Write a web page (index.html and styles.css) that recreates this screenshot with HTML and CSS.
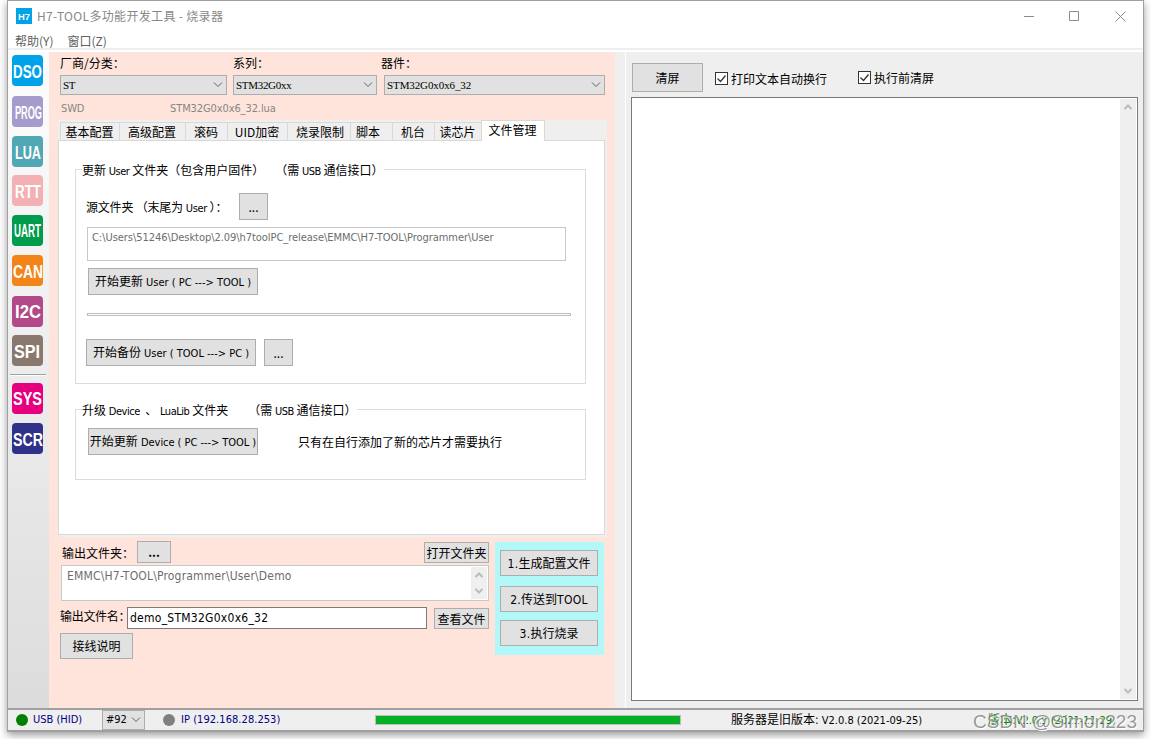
FILE: index.html
```
<!DOCTYPE html>
<html lang="zh-CN">
<head>
  <meta charset="UTF-8">
  <title>H7-TOOL多功能开发工具 - 烧录器</title>
  <link rel="stylesheet" href="styles.css">
</head>
<body>
<div class="window">

  <!-- Title bar -->
  <header class="titlebar">
    <svg class="logo" width="16" height="16"><rect width="16" height="16" fill="#00a2e8"/><text x="2" y="12" textLength="12" lengthAdjust="spacingAndGlyphs">H7</text></svg>
    <span class="title">H7-TOOL多功能开发工具 - 烧录器</span>
    <svg class="controls" width="110" height="14" fill="none" stroke="#8c8c8c">
      <path d="M0 7.5h10M45.5 2.5h9v9h-9zM91.5 2.5l10 10M101.5 2.5l-10 10"/>
    </svg>
  </header>
  <nav class="menu">
    <span>帮助(Y)</span>
    <span>窗口(Z)</span>
  </nav>

  <main class="body">
    <!-- Tool buttons -->
    <aside class="sidebar">
      <svg class="tool dso"><text x="1" y="23" textLength="29" lengthAdjust="spacingAndGlyphs">DSO</text></svg>
      <svg class="tool prog"><text x="3" y="23" textLength="27" lengthAdjust="spacingAndGlyphs">PROG</text></svg>
      <svg class="tool lua"><text x="3" y="23" textLength="26" lengthAdjust="spacingAndGlyphs">LUA</text></svg>
      <svg class="tool rtt"><text x="3" y="23" textLength="26" lengthAdjust="spacingAndGlyphs">RTT</text></svg>
      <svg class="tool uart"><text x="2" y="22" textLength="27" lengthAdjust="spacingAndGlyphs">UART</text></svg>
      <svg class="tool can"><text x="1" y="23" textLength="30" lengthAdjust="spacingAndGlyphs">CAN</text></svg>
      <svg class="tool i2c"><text x="3" y="22" textLength="26" lengthAdjust="spacingAndGlyphs">I2C</text></svg>
      <svg class="tool spi"><text x="2" y="23" textLength="26" lengthAdjust="spacingAndGlyphs">SPI</text></svg>
      <hr>
      <svg class="tool sys"><text x="1" y="22" textLength="29" lengthAdjust="spacingAndGlyphs">SYS</text></svg>
      <svg class="tool scr"><text x="1" y="23" textLength="30" lengthAdjust="spacingAndGlyphs">SCR</text></svg>
    </aside>

    <!-- Programmer panel -->
    <section class="programmer">
      <div class="chip">
        <label>厂商/分类：</label>
        <label>系列：</label>
        <label>器件：</label>
        <div class="combo"><span>ST</span><svg class="arrow"><path d="M1 1.5l4 4 4-4"/></svg></div>
        <div class="combo"><span>STM32G0xx</span><svg class="arrow"><path d="M1 1.5l4 4 4-4"/></svg></div>
        <div class="combo"><span>STM32G0x0x6_32</span><svg class="arrow"><path d="M1 1.5l4 4 4-4"/></svg></div>
      </div>
      <div class="script-info"><span>SWD</span><span>STM32G0x0x6_32.lua</span></div>

      <div class="tabs">
        <div class="tab t1">基本配置</div>
        <div class="tab t2">高级配置</div>
        <div class="tab t3">滚码</div>
        <div class="tab t4">UID加密</div>
        <div class="tab t5">烧录限制</div>
        <div class="tab t6">脚本</div>
        <div class="tab t7">机台</div>
        <div class="tab t8">读芯片</div>
        <div class="tab active">文件管理</div>
      </div>
      <div class="page">
        <fieldset class="user-group">
          <legend>更新<i> User </i>文件夹（包含用户固件）<i class="gap"></i>（需<i> USB </i>通信接口）</legend>
          <div class="source">
            <span>源文件夹 （末尾为<i> User</i> ）：</span>
            <button class="more">...</button>
          </div>
          <div class="path">C:\Users\51246\Desktop\2.09\h7toolPC_release\EMMC\H7-TOOL\Programmer\User</div>
          <button class="wide">开始更新<i> User ( PC ---&gt; TOOL )</i></button>
          <div class="bevel"></div>
          <div class="backup">
            <button class="wide">开始备份<i> User ( TOOL ---&gt; PC )</i></button>
            <button class="more">...</button>
          </div>
        </fieldset>
        <fieldset class="device-group">
          <legend>升级<i> Device </i> 、<i> LuaLib </i>文件夹<i class="gap2"></i>（需<i> USB </i>通信接口）</legend>
          <div class="device">
            <button class="wide">开始更新<i> Device ( PC ---&gt; TOOL )</i></button>
            <span>只有在自行添加了新的芯片才需要执行</span>
          </div>
        </fieldset>
      </div>

      <div class="output">
        <div class="files">
          <div class="folder">
            <span>输出文件夹：</span>
            <button class="dots">...</button>
            <button class="open">打开文件夹</button>
          </div>
          <div class="memo">
            <span>EMMC\H7-TOOL\Programmer\User\Demo</span>
            <div class="scroll"><svg class="arrow"><path d="M1.5 6l3.5-3.5L8.5 6"/></svg><svg class="arrow"><path d="M1.5 2l3.5 3.5L8.5 2"/></svg></div>
          </div>
          <div class="name">
            <span>输出文件名：</span>
            <div class="input">demo_STM32G0x0x6_32</div>
            <button>查看文件</button>
          </div>
          <button class="wiring">接线说明</button>
        </div>
        <div class="steps">
          <button><i>1.</i>生成配置文件</button>
          <button><i>2.</i>传送到<i>TOOL</i></button>
          <button><i>3.</i>执行烧录</button>
        </div>
      </div>
    </section>

    <!-- Log panel -->
    <section class="log">
      <div class="log-bar">
        <button>清屏</button>
        <label class="wrap"><svg class="check"><rect x=".5" y=".5" width="12" height="12"/><path d="M2.5 6.5l3 3 5-6"/></svg>打印文本自动换行</label>
        <label class="clear"><svg class="check"><rect x=".5" y=".5" width="12" height="12"/><path d="M2.5 6.5l3 3 5-6"/></svg>执行前清屏</label>
      </div>
      <div class="console">
        <div class="scroll"><svg class="arrow"><path d="M1.5 6l3.5-3.5L8.5 6"/></svg><svg class="arrow"><path d="M1.5 2l3.5 3.5L8.5 2"/></svg></div>
      </div>
    </section>
  </main>

  <!-- Status bar -->
  <footer class="status">
    <span class="dot green"></span><span class="usb">USB (HID)</span>
    <div class="device-no"><span>#92</span><svg class="arrow"><path d="M1 1.5l4 4 4-4"/></svg></div>
    <span class="dot grey"></span><span class="ip">IP (192.168.28.253)</span>
    <div class="progress"></div>
    <span class="server">服务器是旧版本:<i> V2.0.8 (2021-09-25)</i></span>
    <span class="version">版本:<i>V2.0.9 (2021-11-29)</i></span>
  </footer>
</div>
<div class="watermark">CSDN @Simon223</div>
</body>
</html>
```
FILE: styles.css
```
* {
  box-sizing: border-box;
}
body {
  margin: 0;
  height: 739px;
  overflow: hidden;
  background: #fff;
  font: 12px/14px "Noto Sans CJK SC", sans-serif;
  color: #000;
}
i, .script-info, .path, .memo, .input, .status {
  font-family: "DejaVu Sans Condensed", "DejaVu Sans", "Noto Sans CJK SC", sans-serif;
  font-stretch: condensed;
  font-style: normal;
}
i {
  font-size: 11px;
  letter-spacing: -0.3px;
  white-space: pre;
}
button {
  padding: 0;
  border: 1px solid #adadad;
  background: #e1e1e1;
  color: #000;
  font: inherit;
  white-space: nowrap;
}
.window {
  width: 1137px;
  height: 732px;
  margin-left: 7px;
  border: 1px solid #a0a0a0;
  border-bottom-width: 2px;
  background: #efefef;
  box-shadow: 0 3px 8px rgba(0, 0, 0, 0.4);
}

/* title and menu */
.titlebar {
  display: flex;
  align-items: center;
  height: 29px;
  padding: 0 9px 0 8px;
  background: #fff;
  color: #888;
}
.logo text {
  fill: #fff;
  font: bold 9px "Liberation Sans", sans-serif;
}
.title {
  margin-left: 5px;
  font-size: 12px;
  letter-spacing: 0.33px;
}
.controls {
  margin-left: auto;
}
.menu {
  display: flex;
  gap: 14px;
  height: 22px;
  padding: 4px 7px 0;
  border-bottom: 2px solid #fff;
  background: linear-gradient(#fff 18px, #efefef 18px);
  background-clip: padding-box;
  color: #606060;
}
.body {
  display: flex;
  height: 656px;
}

/* tool buttons */
.sidebar {
  width: 41px;
  padding: 3px 4px 0;
  background: linear-gradient(#fdfdfd, #dcdcdc);
}
.tool {
  display: block;
  width: 31px;
  height: 31px;
  margin-bottom: 9px;
  border-radius: 4px;
  overflow: visible;
}
.tool text {
  fill: #fff;
  font: bold 18px "Liberation Sans", sans-serif;
}
.dso { background: #00a2e8; margin-bottom: 10px; }
.prog { background: #a79bcd; }
.lua { background: #52a7b4; margin-bottom: 8px; }
.rtt { background: #f4b1b3; }
.uart { background: #009c4e; }
.can { background: #f28519; margin-bottom: 10px; }
.i2c { background: #b24988; margin-bottom: 8px; }
.spi { background: #89786d; margin-bottom: 8px; }
.sys { background: #e6007f; }
.scr { background: #2f3288; }
.sidebar hr {
  width: 36px;
  height: 2px;
  margin: 0 0 7px -2px;
  border: 0;
  border-top: 1px solid #a0a0a0;
  background: #fff;
}

/* programmer panel */
.programmer {
  width: 566px;
  padding: 4px 8px 0 9px;
  background: #ffe4db;
}
.chip {
  display: grid;
  grid-template-columns: 167px 143px 221px;
  grid-template-rows: 19px 20px;
  column-gap: 7px;
  padding-left: 2px;
}
.chip label:nth-child(2) {
  margin-left: -1px;
}
.chip label:nth-child(3) {
  margin-left: -3px;
}
.combo {
  display: flex;
  align-items: center;
  justify-content: space-between;
  padding: 0 3px 0 2px;
  border: 1px solid #adadad;
  background: #e1e1e1;
  font: 11px "Liberation Serif", serif;
  letter-spacing: -0.3px;
}
.combo:nth-child(5) {
  margin-left: -1px;
}
.combo:nth-child(6) {
  letter-spacing: -0.1px;
}
.arrow {
  width: 10px;
  height: 8px;
  fill: none;
  stroke: #606060;
}
.script-info {
  display: flex;
  height: 25px;
  padding: 7px 0 0 3px;
  color: #868686;
  font-size: 11px;
  letter-spacing: -0.1px;
}
.script-info span:first-child {
  width: 109px;
}
.tabs {
  display: flex;
  align-items: flex-end;
  height: 20px;
  padding-left: 2px;
  background: #efefef;
}
.tab {
  height: 18px;
  padding: 2px 1px 0 0;
  border: 1px solid #d9d9d9;
  border-width: 1px 0 0 1px;
  text-align: center;
  white-space: nowrap;
}
.t1 { width: 59px; }
.t2 { width: 66px; }
.t3 { width: 42px; }
.t4 { width: 60px; }
.t5 { width: 63px; padding-left: 3px; }
.t6 { width: 42px; padding-right: 7px; }
.t7 { width: 42px; }
.t8 { width: 47px; }
.tab.active {
  width: 64px;
  height: 21px;
  margin-bottom: -1px;
  border-right-width: 1px;
  background: #fff;
  position: relative;
}
.page {
  width: 547px;
  height: 395px;
  padding: 20px 17px 0 16px;
  border: 1px solid #d9d9d9;
  background: #fff;
  box-shadow: 2px 2px #efefef;
}
fieldset {
  width: 511px;
  min-width: 0;
  margin: 0;
  padding: 0;
  border: 1px solid #dcdcdc;
}
legend {
  height: 16px;
  margin-left: 6px;
  padding: 2px 0 0;
  white-space: nowrap;
}
.gap {
  display: inline-block;
  width: 11px;
}
.gap2 {
  display: inline-block;
  width: 20px;
}
legend i {
  letter-spacing: -0.45px;
}
.user-group {
  height: 223px;
  padding-left: 10px;
}
.user-group legend {
  margin-left: -4px;
}
.source {
  display: flex;
  align-items: center;
  height: 27px;
  margin-top: 16px;
}
.source span {
  width: 153px;
  padding-top: 2px;
  letter-spacing: -0.2px;
  white-space: nowrap;
}
.more {
  width: 29px;
  height: 27px;
}
.path {
  width: 479px;
  height: 34px;
  margin: 7px 0 7px 1px;
  padding: 3px 4px;
  border: 1px solid #c8c8c8;
  color: #6d6d6d;
  font-size: 11px;
  letter-spacing: -0.05px;
  white-space: nowrap;
}
.wide {
  display: block;
  width: 170px;
  height: 27px;
}
.wide i {
  letter-spacing: 0;
}
.path + .wide {
  margin-left: 2px;
}
.bevel {
  width: 484px;
  height: 3px;
  margin: 18px 0 23px 1px;
  border: 1px solid #bcbcbc;
}
.backup {
  display: flex;
  gap: 8px;
}
.device-group {
  height: 79px;
  margin-top: 17px;
}
.device {
  display: flex;
  align-items: center;
  gap: 40px;
  margin: 11px 0 0 12px;
}
.device i {
  letter-spacing: -0.05px;
}

/* output settings */
.output {
  display: flex;
  gap: 6px;
  margin-top: 6px;
  padding-left: 2px;
}
.files {
  width: 429px;
}
.folder {
  display: flex;
  height: 24px;
  padding-left: 2px;
}
.folder span {
  width: 75px;
  padding-top: 5px;
}
.dots {
  width: 34px;
  height: 22px;
  font-weight: bold;
}
.open {
  width: 65px;
  height: 21px;
  margin: 1px 0 0 auto;
}
.memo {
  display: flex;
  justify-content: space-between;
  width: 428px;
  height: 36px;
  margin-left: 1px;
  padding: 1px 1px 1px 5px;
  border: 1px solid #c8c8c8;
  background: #fff;
  color: #6d6d6d;
  letter-spacing: 0.18px;
}
.memo span {
  padding-top: 2px;
}
.scroll {
  display: flex;
  flex-direction: column;
  align-items: center;
  justify-content: space-between;
  width: 16px;
  padding: 4px 0;
  background: #efefef;
}
.scroll .arrow {
  stroke: #bcbcbc;
  stroke-width: 2;
}
.name {
  display: flex;
  height: 22px;
  margin: 6px 0 4px;
}
.name span {
  width: 67px;
  padding-top: 2px;
  letter-spacing: -0.3px;
  white-space: nowrap;
}
.input {
  width: 300px;
  padding: 3px 2px;
  border: 1px solid #7a7a7a;
  background: #fff;
  letter-spacing: 0.26px;
}
.name button {
  width: 55px;
  height: 21px;
  margin: 1px 0 0 7px;
}
.wiring {
  width: 73px;
  height: 26px;
}
.steps {
  width: 109px;
  height: 113px;
  margin-top: 1px;
  padding: 8px 6px 0 5px;
  background: #b2f8f8;
}
.steps button {
  display: block;
  width: 98px;
  height: 26px;
  margin-bottom: 10px;
}
.steps button:nth-child(2) {
  margin-bottom: 8px;
}
.steps i {
  font-size: 12px;
  letter-spacing: 0.3px;
}

/* log */
.log {
  flex: 1;
  display: flex;
  flex-direction: column;
  margin-left: 10px;
  padding: 11px 5px 7px 5px;
  border-left: 1px solid #fff;
}
.log-bar {
  display: flex;
  height: 34px;
  padding-left: 1px;
}
.log-bar button {
  width: 71px;
  height: 29px;
}
.log-bar label {
  display: flex;
  align-items: center;
  gap: 3px;
  height: 31px;
  white-space: nowrap;
}
.wrap {
  margin-left: 12px;
}
.clear {
  margin-left: 31px;
  margin-top: -1px;
}
.check {
  width: 13px;
  height: 13px;
  fill: #fff;
  stroke: #333;
}
.check path {
  fill: none;
  stroke-width: 1.3;
}
.console {
  flex: 1;
  display: flex;
  justify-content: flex-end;
  padding: 1px;
  border: 1px solid #7a7a7a;
  background: #fff;
}

/* status bar */
.status {
  display: flex;
  align-items: center;
  height: 22px;
  padding-left: 8px;
  border-top: 2px solid #a0a0a0;
  font-size: 11px;
  white-space: nowrap;
}
.dot {
  width: 12px;
  height: 12px;
  border-radius: 50%;
}
.green { background: #008000; }
.grey { background: #808080; }
.usb, .ip {
  margin-left: 5px;
  color: #000080;
}
.usb {
  width: 69px;
}
.device-no {
  display: flex;
  align-items: center;
  justify-content: space-between;
  width: 43px;
  height: 20px;
  margin-right: 18px;
  padding: 0 3px;
  border: 1px solid #adadad;
  background: #e1e1e1;
}
.ip {
  width: 194px;
  margin-left: 6px;
  letter-spacing: 0.05px;
}
.progress {
  width: 306px;
  height: 10px;
  border: 1px solid #bcbcbc;
  background: #06b025;
}
.server, .version {
  font-size: 12px;
}
.status i {
  letter-spacing: 0;
}
.server {
  width: 257px;
  margin-left: 50px;
}
.version {
  color: #008000;
}
.watermark {
  position: absolute;
  left: 973px;
  top: 712px;
  color: rgba(120, 120, 120, 0.75);
  font: 19px/20px "Liberation Sans", sans-serif;
  text-shadow: 1px 1px #fff;
  white-space: nowrap;
}
```
